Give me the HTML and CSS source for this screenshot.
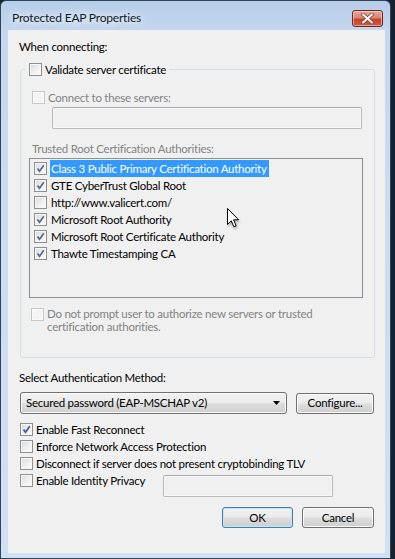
FILE: index.html
```html
<!DOCTYPE html>
<html>
<head>
<meta charset="utf-8">
<title>Protected EAP Properties</title>
<link rel="stylesheet" href="styles.css">
</head>
<body>
<div class="window">
  <div class="titlebar">
    <span class="title">Protected EAP Properties</span>
    <span class="close" aria-label="Close">
      <svg width="13" height="11" viewBox="0 0 13 11"><path d="M2 1.5 L11 9.5 M11 1.5 L2 9.5" stroke="#7b2d24" stroke-width="3.6" stroke-linecap="round"/><path d="M2 1.5 L11 9.5 M11 1.5 L2 9.5" stroke="#fff" stroke-width="2.2" stroke-linecap="round"/></svg>
    </span>
  </div>
  <div class="client">
    <div class="label first">When connecting:</div>
    <fieldset class="group">
      <legend class="legend"><span class="cb"></span><span>Validate server certificate</span></legend>
      <div class="chk connect disabled"><span class="cb dis"></span><span>Connect to these servers:</span></div>
      <div class="field servers"></div>
      <div class="caption disabled">Trusted Root Certification Authorities:</div>
      <div class="list">
        <div class="item"><span class="cb on"><svg viewBox="0 0 11 11"><path d="M2.5 5.5 L4.5 8.2 L8.8 2.2" fill="none" stroke="#5a6a8e" stroke-width="1.7"/></svg></span><span class="txt sel">Class 3 Public Primary Certification Authority</span></div>
        <div class="item"><span class="cb on"><svg viewBox="0 0 11 11"><path d="M2.5 5.5 L4.5 8.2 L8.8 2.2" fill="none" stroke="#5a6a8e" stroke-width="1.7"/></svg></span><span class="txt">GTE CyberTrust Global Root</span></div>
        <div class="item"><span class="cb"></span><span class="txt">http://www.valicert.com/</span></div>
        <div class="item"><span class="cb on"><svg viewBox="0 0 11 11"><path d="M2.5 5.5 L4.5 8.2 L8.8 2.2" fill="none" stroke="#5a6a8e" stroke-width="1.7"/></svg></span><span class="txt">Microsoft Root Authority</span></div>
        <div class="item"><span class="cb on"><svg viewBox="0 0 11 11"><path d="M2.5 5.5 L4.5 8.2 L8.8 2.2" fill="none" stroke="#5a6a8e" stroke-width="1.7"/></svg></span><span class="txt">Microsoft Root Certificate Authority</span></div>
        <div class="item"><span class="cb on"><svg viewBox="0 0 11 11"><path d="M2.5 5.5 L4.5 8.2 L8.8 2.2" fill="none" stroke="#5a6a8e" stroke-width="1.7"/></svg></span><span class="txt">Thawte Timestamping CA</span></div>
      </div>
      <div class="chk prompt disabled"><span class="cb dis"></span><span>Do not prompt user to authorize new servers or trusted<br>certification authorities.</span></div>
    </fieldset>
    <div class="label method-label">Select Authentication Method:</div>
    <div class="method-row">
      <div class="combo"><span>Secured password (EAP-MSCHAP v2)</span><svg width="7" height="4" viewBox="0 0 7 4"><path d="M0 0 H7 L3.5 4 Z" fill="#000"/></svg></div>
      <button class="btn configure">Configure...</button>
    </div>
    <div class="checks">
      <div class="chk row"><span class="cb on"><svg viewBox="0 0 11 11"><path d="M2.5 5.5 L4.5 8.2 L8.8 2.2" fill="none" stroke="#3d5a9c" stroke-width="1.7"/></svg></span><span>Enable Fast Reconnect</span></div>
      <div class="chk row"><span class="cb"></span><span>Enforce Network Access Protection</span></div>
      <div class="chk row"><span class="cb"></span><span>Disconnect if server does not present cryptobinding TLV</span></div>
      <div class="row-id">
        <div class="chk row id-label"><span class="cb"></span><span>Enable Identity Privacy</span></div>
        <div class="field identity"></div>
      </div>
    </div>
    <div class="buttons">
      <button class="btn ok">OK</button>
      <button class="btn cancel">Cancel</button>
    </div>
  </div>
</div>
<svg class="cursor" width="14" height="22" viewBox="0 0 14 22"><path d="M1.5 1.5 L1.5 17.5 L5.2 13.8 L7.8 19.8 L10.2 18.8 L7.6 12.8 L12.6 12.8 Z" fill="#fff" stroke="#000" stroke-width="1" stroke-linejoin="round"/></svg>
</body>
</html>
```

FILE: styles.css
```css
html, body {
  margin: 0;
  padding: 0;
}
body {
  background: #16212d;
  width: 395px;
  height: 559px;
  overflow: hidden;
  position: relative;
  font-family: Lato, "Open Sans", sans-serif;
  font-size: 11.5px;
  letter-spacing: -0.25px;
  color: #000;
}
.window {
  width: 391px;
  height: 559px;
  box-sizing: border-box;
  border: 1px solid #2f4359;
  border-radius: 6px 6px 0 0;
  background: linear-gradient(#b6cde8 0px, #c3d7ee 28px, #cadcf0 200px, #d0e1f3 559px);
  display: flex;
  flex-direction: column;
  padding: 0 5px 5px 7px;
}
.titlebar {
  height: 29px;
  display: flex;
  align-items: flex-start;
  flex: none;
}
.title {
  padding: 9px 0 0 4px;
  line-height: 16px;
  font-size: 12px;
  letter-spacing: -0.2px;
  color: #0b1a2b;
  text-shadow: 0 0 6px #fff, 0 0 10px #eef5fd;
}
.close {
  margin: 9px 2px 0 auto;
  width: 31px;
  height: 17px;
  box-sizing: border-box;
  border: 1px solid #6c2a23;
  border-radius: 3px;
  background: linear-gradient(#e9a99b 0%, #d98670 45%, #c8452f 55%, #d0583d 100%);
  box-shadow: inset 0 0 0 1px rgba(255,220,210,0.55);
  display: flex;
  align-items: center;
  justify-content: center;
}
.client {
  flex: 1;
  background: #f0f0f0;
  display: flex;
  flex-direction: column;
  padding: 0 10px 0 11px;
  line-height: 14px;
}
.label.first {
  margin-top: 10px;
}
.group {
  margin: 9px 0 0 1px;
  padding: 0 0 24px 0;
  border: 1px solid #d5dfe5;
  border-radius: 3px;
  min-width: 0;
  display: flex;
  flex-direction: column;
}
.legend {
  margin-left: 5px;
  padding: 0 3px;
  display: flex;
  align-items: center;
  gap: 3px;
  height: 13px;
  line-height: 13px;
}
.cb {
  width: 13px;
  height: 13px;
  box-sizing: border-box;
  border: 1px solid #8e8f8f;
  background: linear-gradient(135deg, #d9d9d9 0%, #f1f1f1 60%, #fdfdfd 100%);
  box-shadow: inset 0 0 0 1px #f7f7f7;
  flex: none;
  display: flex;
  align-items: center;
  justify-content: center;
}
.cb svg {
  width: 11px;
  height: 11px;
  display: block;
}
.cb.dis {
  border-color: #c6c6c6;
  background: #f4f4f4;
  box-shadow: inset 0 0 0 1px #fbfbfb;
}
.disabled {
  color: #838383;
}
.chk {
  display: flex;
  align-items: center;
  gap: 3px;
}
.connect {
  margin: 15px 0 0 11px;
  height: 13px;
  line-height: 13px;
}
.field {
  box-sizing: border-box;
  height: 22px;
  border: 1px solid #b5b8bc;
  border-top-color: #a8abaf;
  background: #f0f0f0;
  box-shadow: inset 0 0 0 1px #f7f7f7;
  border-radius: 2px;
}
.servers {
  margin: 3px 12px 0 31px;
}
.caption {
  margin: 13px 0 0 11px;
}
.list {
  margin: 2px 11px 0 8px;
  height: 140px;
  box-sizing: border-box;
  border: 1px solid #8d9097;
  background: #f0f0f0;
  padding: 1px 0 0 4px;
}
.item {
  height: 17px;
  display: flex;
  align-items: center;
}
.txt {
  margin-left: 3px;
  padding: 0 2px 0 1px;
  height: 17px;
  line-height: 17px;
}
.txt.sel {
  background: #3399ff;
  color: #fff;
}
.prompt {
  margin: 9px 0 0 10px;
  align-items: flex-start;
  line-height: 13px;
}
.prompt .cb {
  margin-top: 1px;
}
.method-label {
  margin-top: 13px;
}
.method-row {
  margin: 7px 0 0 1px;
  display: flex;
  align-items: center;
  gap: 9px;
  height: 22px;
}
.combo, .btn {
  box-sizing: border-box;
  border: 1px solid #707070;
  border-radius: 3px;
  background: linear-gradient(#f2f2f2 0%, #ebebeb 48%, #dddddd 52%, #cfcfcf 100%);
  box-shadow: inset 0 0 0 1px #fbfbfb;
  font: inherit;
  letter-spacing: inherit;
  color: #000;
  line-height: 14px;
}
.combo {
  width: 267px;
  height: 22px;
  display: flex;
  align-items: center;
  justify-content: space-between;
  padding: 0 6px 0 5px;
}
.combo svg {
  display: block;
}
.btn {
  padding: 0;
  height: 21px;
  text-align: center;
}
.configure {
  width: 78px;
}
.checks {
  margin: 7px 0 0 1px;
  display: flex;
  flex-direction: column;
}
.row {
  height: 17px;
  line-height: 17px;
}
.row-id {
  display: flex;
  align-items: flex-start;
}
.id-label {
  width: 143px;
  flex: none;
}
.identity {
  margin-top: 3px;
  width: 170px;
}
.buttons {
  margin: 10px 1px 0 0;
  display: flex;
  justify-content: flex-end;
  gap: 9px;
}
.ok {
  width: 71px;
  border-color: #3c7fb1;
  box-shadow: inset 0 0 0 1px #c3e6f8;
}
.cancel {
  width: 72px;
}
.cursor {
  position: absolute;
  left: 226px;
  top: 207px;
  filter: drop-shadow(1px 2px 1px rgba(0,0,0,0.25));
}
```
